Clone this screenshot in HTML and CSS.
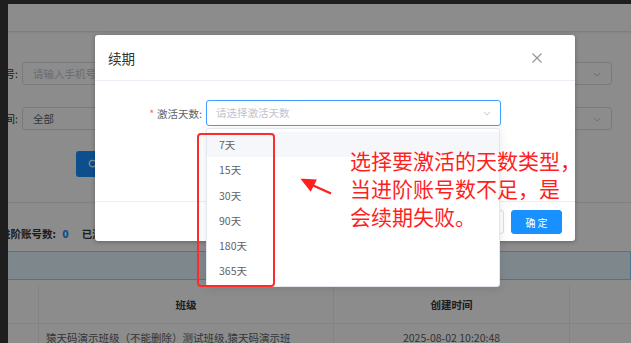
FILE: index.html
```html
<!DOCTYPE html>
<html lang="zh-CN">
<head>
  <meta charset="UTF-8" />
  <title>续期</title>
  <link rel="stylesheet" href="styles.css">
</head>
<body>
  <div class="app">
    <div class="topbar"></div>

    <div class="filters">
      <div class="filter-row">
        <div class="field">
          <label>手机号:</label>
          <div class="input placeholder">请输入手机号码</div>
        </div>
        <div class="bg-select">
          <span>全部</span>
          <svg class="chevron" viewBox="0 0 10 6"><path d="M1 1l4 4 4-4"/></svg>
        </div>
      </div>
      <div class="filter-row">
        <div class="field">
          <label>激活时间:</label>
          <div class="input">全部</div>
        </div>
        <div class="bg-select">
          <span>全部</span>
          <svg class="chevron" viewBox="0 0 10 6"><path d="M1 1l4 4 4-4"/></svg>
        </div>
      </div>
      <div class="filter-actions">
        <button class="btn-search">
          <svg viewBox="0 0 12 12"><circle cx="5" cy="5" r="3.6"/><path d="M7.7 7.7l2.6 2.6"/></svg>
          查询
        </button>
      </div>
    </div>

    <div class="stats">进阶账号数: <b>0</b><span class="stat-gap">已激活账号数: <b>0</b></span></div>

    <div class="alert"></div>

    <table class="grid">
      <thead>
        <tr><th class="col-sel"></th><th class="col-class">班级</th><th class="col-time">创建时间</th><th class="col-rest"></th></tr>
      </thead>
      <tbody>
        <tr><td></td><td class="cell-left">猿天码演示班级（不能删除）测试班级,猿天码演示班</td><td>2025-08-02 10:20:48</td><td></td></tr>
      </tbody>
    </table>

    <div class="mask"></div>

    <div class="dialog">
      <div class="dialog-header">
        <span class="dialog-title">续期</span>
        <svg class="dialog-close" viewBox="0 0 10 10"><path d="M0.5 0.5l9 9M9.5 0.5l-9 9"/></svg>
      </div>
      <div class="dialog-body">
        <div class="form-item">
          <label class="form-label"><span class="req">*</span>激活天数:</label>
          <div class="select is-focus">
            <span class="placeholder">请选择激活天数</span>
            <svg class="chevron" viewBox="0 0 10 6"><path d="M1 1l4 4 4-4"/></svg>
          </div>
        </div>
      </div>
      <div class="dialog-footer">
        <button class="btn">取 消</button>
        <button class="btn btn-primary">确 定</button>
      </div>
    </div>

    <ul class="dropdown">
      <li class="hover">7天</li>
      <li>15天</li>
      <li>30天</li>
      <li>90天</li>
      <li>180天</li>
      <li>365天</li>
    </ul>

    <div class="note-box"></div>
    <svg class="note-arrow" viewBox="0 0 30 16">
      <path d="M28 14.5L8 5.5" />
      <polygon points="0,1 12,1.5 7.5,10.5" />
    </svg>
    <div class="note-text">选择要激活的天数类型，<br>当进阶账号数不足，是<br>会续期失败。</div>
  </div>
</body>
</html>
```

FILE: styles.css
```css
html, body {
  margin: 0;
  padding: 0;
}
body {
  background: #1e1e1e;
  width: 631px;
  height: 343px;
  overflow: hidden;
  font-family: "Noto Sans CJK SC", "Noto Sans", sans-serif;
  font-size: 10.5px;
  color: #606266;
}
.app {
  position: relative;
  margin: 4px 0 0 8px;
  width: 623px;
  height: 339px;
  background: #fff;
  overflow: hidden;
}
.topbar {
  height: 27px;
  border-bottom: 1px solid #e6e6e6;
  box-shadow: 0 1px 2px rgba(0, 0, 0, 0.06);
}

/* filter card */
.filters {
  padding: 30px 0 0;
  height: 140px;
  border-bottom: 1px solid #e8e8e8;
}
.filter-row {
  display: flex;
  justify-content: space-between;
  align-items: center;
  height: 23px;
  margin-bottom: 22px;
}
.field {
  display: flex;
  align-items: center;
  margin-left: -56px;
}
.field label {
  width: 66px;
  text-align: right;
  color: #333;
}
.input {
  margin-left: 4px;
  width: 160px;
  height: 21px;
  line-height: 21px;
  border: 1px solid #dcdfe6;
  border-radius: 3px;
  padding-left: 10px;
  color: #606266;
}
.input.placeholder {
  color: #c0c4cc;
}
.bg-select {
  position: relative;
  width: 120px;
  height: 21px;
  line-height: 21px;
  margin-right: 19px;
  border: 1px solid #dcdfe6;
  border-radius: 3px;
  padding-left: 10px;
  box-sizing: content-box;
}
.chevron {
  position: absolute;
  width: 8px;
  height: 5px;
  fill: none;
  stroke: #c0c4cc;
  stroke-width: 1.2;
}
.bg-select .chevron {
  right: 10px;
  top: 9px;
}
.filter-actions {
  padding-left: 68px;
  margin-top: -1px;
}
.btn-search {
  display: flex;
  align-items: center;
  gap: 4px;
  width: 72px;
  height: 26px;
  padding: 0 0 0 12px;
  border: none;
  border-radius: 3px;
  background: #1890ff;
  color: #fff;
  font-family: inherit;
  font-size: 10.5px;
}
.btn-search svg {
  width: 11px;
  height: 11px;
  fill: none;
  stroke: #fff;
  stroke-width: 1.4;
}

.stats {
  padding: 24px 0 10px;
  line-height: 14px;
  margin-left: -8px;
  font-weight: bold;
  color: #333;
  white-space: nowrap;
}
.stats b {
  color: #1890ff;
  margin-left: 4px;
}
.stat-gap {
  margin-left: 13px;
}
.alert {
  height: 27px;
  border: 1px solid #91d5ff;
  border-left: none;
  background: #e6f7ff;
}

/* table */
.grid {
  margin-top: 6px;
  border-collapse: collapse;
  table-layout: fixed;
  width: 700px;
  font-size: 10.5px;
}
.grid th, .grid td {
  border-right: 1px solid #ebeef5;
  border-bottom: 1px solid #ebeef5;
  text-align: center;
  white-space: nowrap;
  overflow: hidden;
  padding: 0;
}
.grid th {
  height: 37px;
  color: #333;
  font-weight: bold;
}
.grid td {
  height: 26px;
}
.col-sel { width: 30px; }
.col-class { width: 294px; }
.col-time { width: 235px; }
.col-rest { width: 141px; }
.grid td.cell-left {
  text-align: left;
  padding-left: 7px;
}

.mask {
  position: absolute;
  inset: 0;
  background: rgba(0, 0, 0, 0.45);
}

/* dialog */
.dialog {
  position: absolute;
  left: 87px;
  top: 31px;
  width: 480px;
  height: 206px;
  background: #fff;
  border-radius: 3px;
  box-shadow: 0 1px 4px rgba(0, 0, 0, 0.3);
  display: flex;
  flex-direction: column;
}
.dialog-header {
  position: relative;
  height: 45px;
  border-bottom: 1px solid #ebeef5;
  display: flex;
  align-items: center;
  padding-left: 13px;
}
.dialog-title {
  font-size: 13.5px;
  color: #303133;
}
.dialog-close {
  position: absolute;
  left: 437px;
  top: 18px;
  width: 10px;
  height: 10px;
  fill: none;
  stroke: #909399;
  stroke-width: 1.1;
}
.dialog-body {
  flex: 1;
  padding-top: 19px;
}
.form-item {
  display: flex;
  align-items: center;
}
.form-label {
  width: 107px;
  padding-right: 4px;
  text-align: right;
  color: #606266;
}
.req {
  color: #f56c6c;
  margin-right: 3px;
}
.select {
  position: relative;
  width: 284px;
  height: 24px;
  line-height: 24px;
  padding-left: 9px;
  border: 1px solid #dcdfe6;
  border-radius: 3px;
}
.select.is-focus {
  border-color: #409eff;
}
.select .placeholder {
  color: #c0c4cc;
}
.select .chevron {
  right: 9px;
  top: 10px;
}
.dialog-footer {
  border-top: 1px solid #ebeef5;
  display: flex;
  justify-content: flex-end;
  align-items: flex-start;
  gap: 7px;
  padding: 8px 13px 0 0;
  box-sizing: border-box;
  height: 40px;
}
.btn {
  width: 51px;
  height: 24px;
  border: 1px solid #dcdfe6;
  border-radius: 3px;
  background: #fff;
  color: #606266;
  font-family: inherit;
  font-size: 10px;
  padding: 0;
}
.btn-primary {
  background: #1890ff;
  border-color: #1890ff;
  color: #fff;
}

/* select dropdown */
.dropdown {
  position: absolute;
  left: 198px;
  top: 124px;
  width: 294px;
  margin: 0;
  padding: 3px 0 4px;
  list-style: none;
  background: #fff;
  border: 1px solid #e4e7ed;
  border-radius: 3px;
  box-shadow: 0 2px 10px rgba(0, 0, 0, 0.1);
  box-sizing: border-box;
  height: 159px;
}
.dropdown li {
  height: 25.3px;
  line-height: 25.3px;
  padding-left: 12px;
  color: #606266;
}
.dropdown li.hover {
  background: #f5f7fa;
}

/* annotation */
.note-box {
  position: absolute;
  left: 189px;
  top: 129px;
  width: 74px;
  height: 150px;
  border: 2px solid #ff2a2a;
  border-radius: 4px;
}
.note-arrow {
  position: absolute;
  left: 295px;
  top: 175px;
  width: 30px;
  height: 16px;
  fill: #ff1f1f;
  stroke: #ff1f1f;
  stroke-width: 2.4;
  overflow: visible;
}
.note-text {
  position: absolute;
  left: 342px;
  top: 142px;
  font-size: 21px;
  line-height: 28px;
  color: #ff1f1f;
  white-space: nowrap;
}
```
